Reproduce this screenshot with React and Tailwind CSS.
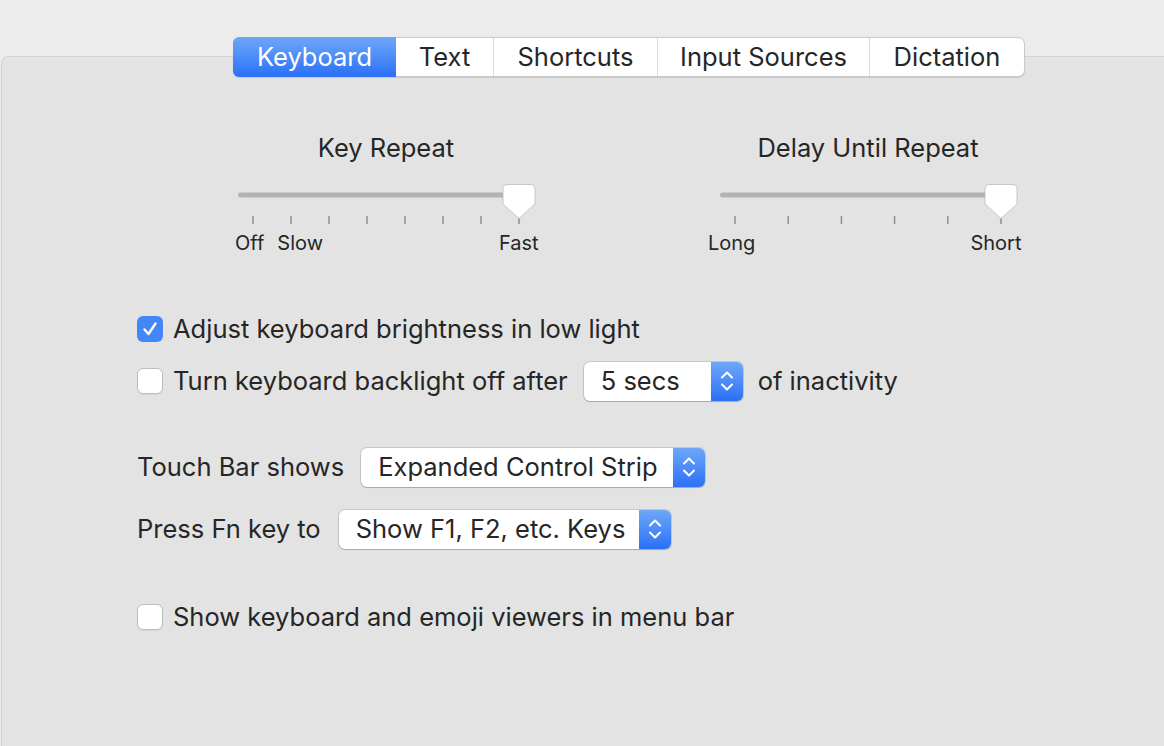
import React from "react";

const font = { fontFamily: "Inter, 'Liberation Sans', sans-serif" };

function Tabs() {
  const tabs = [
    { label: "Keyboard", w: "w-[163px]", active: true },
    { label: "Text", w: "w-[97px]" },
    { label: "Shortcuts", w: "w-[164px]" },
    { label: "Input Sources", w: "w-[212px]" },
    { label: "Dictation", w: "w-[155px]" },
  ];
  return (
    <div className="ml-[231px] -mt-[20px] flex h-[40px] w-fit rounded-[7px] border border-[#c9c9c9] bg-white shadow-[0_1px_1px_rgba(0,0,0,0.12)]">
      {tabs.map((t, i) => (
        <div
          key={t.label}
          className={
            t.active
              ? `${t.w} flex items-center justify-center rounded-l-[6px] -my-px -ml-px bg-gradient-to-b from-[#6ea7f8] to-[#2a6ff6] text-[25.5px] text-white`
              : `${t.w} flex items-center justify-center border-l border-[#dcdcdc] text-[25.5px] text-[#262626] ${i === 1 ? "border-l-0" : ""}`
          }
        >
          {t.label}
        </div>
      ))}
    </div>
  );
}

function SliderGraphic({ ticks, step }) {
  return (
    <svg width="312" height="42" viewBox="0 0 312 42">
      <rect x="8" y="9.5" width="296" height="5" rx="2.5" fill="#b3b3b3" />
      {Array.from({ length: ticks }).map((_, i) => (
        <line key={i} x1={23 + i * step} y1="33" x2={23 + i * step} y2="41" stroke="#8f8f8f" strokeWidth="1.5" />
      ))}
      <path
        d="M277 1.5 H301 Q305 1.5 305 5.5 V21 L289 35.5 L273 21 V5.5 Q273 1.5 277 1.5 Z"
        fill="#ffffff"
        stroke="#bdbdbd"
        strokeWidth="0.8"
      />
    </svg>
  );
}

function Checkbox({ checked }) {
  return checked ? (
    <div className="flex h-[26px] w-[26px] items-center justify-center rounded-[6px] bg-[#4287f5]">
      <svg width="18" height="18" viewBox="0 0 18 18">
        <path d="M3.5 9.5 L7.5 14 L14.5 3.5" fill="none" stroke="white" strokeWidth="2.4" strokeLinecap="round" strokeLinejoin="round" />
      </svg>
    </div>
  ) : (
    <div className="h-[26px] w-[26px] rounded-[6px] border border-[#bdbdbd] bg-white shadow-[0_1px_1px_rgba(0,0,0,0.06)]" />
  );
}

function Select({ value, w }) {
  return (
    <div className={`${w} flex h-[39px] overflow-hidden rounded-[6px] bg-white shadow-[0_0_0_1px_rgba(0,0,0,0.12),0_1px_1px_rgba(0,0,0,0.15)]`}>
      <div className="flex flex-1 items-center pl-[17px] text-[25.5px] text-[#262626]">{value}</div>
      <div className="flex w-[32px] items-center justify-center bg-gradient-to-b from-[#6ea7f8] to-[#2a6ff6]">
        <svg width="16" height="26" viewBox="0 0 16 26">
          <path d="M3 9.5 L8 4.5 L13 9.5" fill="none" stroke="white" strokeWidth="2" strokeLinecap="round" strokeLinejoin="round" />
          <path d="M3 16.5 L8 21.5 L13 16.5" fill="none" stroke="white" strokeWidth="2" strokeLinecap="round" strokeLinejoin="round" />
        </svg>
      </div>
    </div>
  );
}

export default function App() {
  return (
    <div className="h-[746px] w-full overflow-hidden bg-[#ececec] pt-[56px] text-[#262626]" style={font}>
      <div className="ml-px h-full rounded-tl-[8px] border-l border-t border-[#d3d3d3] bg-[#e3e3e3]">
        <Tabs />

        {/* sliders */}
        <div className="mt-[56px] flex gap-[170px] pl-[228px]">
          <div className="w-[312px]">
            <div className="text-center text-[25.5px] leading-[30px]">Key Repeat</div>
            <div className="mt-[20px]">
              <SliderGraphic ticks={8} step={38} />
            </div>
            <div className="mt-[6px] flex text-[20px] leading-[24px]">
              <span className="ml-[5px]">Off</span>
              <span className="ml-[13px]">Slow</span>
              <span className="ml-[176px]">Fast</span>
            </div>
          </div>
          <div className="w-[312px]">
            <div className="text-center text-[25.5px] leading-[30px]">Delay Until Repeat</div>
            <div className="mt-[20px]">
              <SliderGraphic ticks={6} step={53.2} />
            </div>
            <div className="mt-[6px] flex text-[20px] leading-[24px]">
              <span className="ml-[-4px]">Long</span>
              <span className="ml-[215px]">Short</span>
            </div>
          </div>
        </div>

        {/* options */}
        <div className="mt-[54px] pl-[135px] text-[25.5px]">
          <div className="flex h-[40px] items-center gap-[10px]">
            <Checkbox checked />
            <span>Adjust keyboard brightness in low light</span>
          </div>
          <div className="mt-[12px] flex h-[40px] items-center">
            <Checkbox />
            <span className="ml-[10px]">Turn keyboard backlight off after</span>
            <div className="ml-[16px]">
              <Select value="5 secs" w="w-[159px]" />
            </div>
            <span className="ml-[15px]">of inactivity</span>
          </div>

          <div className="mt-[46px] flex h-[40px] items-center">
            <span>Touch Bar shows</span>
            <div className="ml-[17px]">
              <Select value="Expanded Control Strip" w="w-[344px]" />
            </div>
          </div>
          <div className="mt-[22px] flex h-[40px] items-center">
            <span>Press Fn key to</span>
            <div className="ml-[18px]">
              <Select value="Show F1, F2, etc. Keys" w="w-[332px]" />
            </div>
          </div>

          <div className="mt-[48px] flex h-[40px] items-center gap-[10px]">
            <Checkbox />
            <span>Show keyboard and emoji viewers in menu bar</span>
          </div>
        </div>
      </div>
    </div>
  );
}
